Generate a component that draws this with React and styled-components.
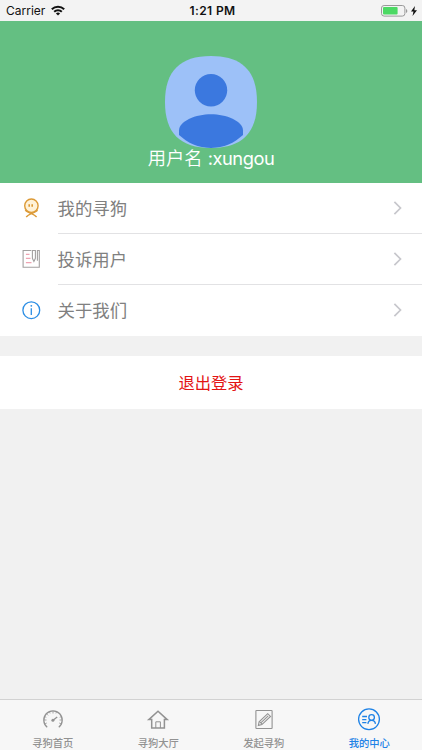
import React from 'react';
import styled, { createGlobalStyle } from 'styled-components';

const GlobalStyle = createGlobalStyle`
  * {
    box-sizing: border-box;
  }

  body {
    margin: 0;
    font-family: Inter, 'Noto Sans CJK SC', sans-serif;
    background: #f1f1f1;
  }
`;

const Screen = styled.div`
  display: flex;
  flex-direction: column;
  height: 100vh;
  overflow: hidden;
`;

const StatusBar = styled.div`
  display: grid;
  grid-template-columns: 1fr auto 1fr;
  align-items: center;
  height: 21px;
  padding: 0 5px 0 6px;
  background: #f3f3f3;
  color: #111;
  font-size: 12px;
`;

const StatusGroup = styled.div`
  display: flex;
  align-items: center;
  justify-content: ${(props) => (props.$end ? 'flex-end' : 'flex-start')};
  gap: ${(props) => (props.$end ? '3px' : '6px')};
`;

const Time = styled.span`
  padding-left: 2px;
  font-size: 12px;
  font-weight: 600;
  letter-spacing: 0.4px;
`;

const Profile = styled.div`
  display: flex;
  flex-direction: column;
  align-items: center;
  height: 162px;
  padding-top: 35px;
  background: #64bf82;
`;

const UserName = styled.div`
  margin-top: -1px;
  color: #fff;
  font-size: 18.3px;
  font-weight: 350;
  line-height: 22px;
  white-space: pre;
`;

const Latin = styled.span`
  font-weight: 400;
  letter-spacing: -0.45px;
`;

const Menu = styled.div`
  height: 153px;
  background: #fff;
`;

const MenuRow = styled.div`
  display: flex;
  align-items: center;
  height: 51px;
  padding-left: 21px;
`;

const MenuBody = styled.div`
  display: flex;
  flex: 1;
  align-items: center;
  justify-content: space-between;
  height: 51px;
  margin-left: 15.5px;
  padding-right: 19px;
  border-bottom: 1px solid ${(props) => (props.$last ? 'transparent' : '#e2e2e4')};
  color: #808080;
  font-size: 17.4px;
  font-weight: 400;
`;

const MenuLabel = styled.span`
  padding-bottom: 2px;
`;

const Logout = styled.div`
  display: flex;
  align-items: center;
  justify-content: center;
  height: 53px;
  margin-top: 20px;
  padding-bottom: 2px;
  background: #fff;
  color: #e31414;
  font-size: 16.3px;
`;

const TabBar = styled.div`
  display: grid;
  grid-template-columns: repeat(4, 1fr);
  height: 51px;
  margin-top: auto;
  border-top: 1px solid #d2d2d2;
  background: #f7f7f7;
`;

const Tab = styled.div`
  display: flex;
  flex-direction: column;
  align-items: center;
  padding-top: 7px;
  color: ${(props) => (props.$active ? '#1e82e6' : '#929292')};
  font-size: 10.3px;
  font-weight: 500;
  line-height: 14px;

  svg {
    margin-bottom: 5px;
  }
`;

const WifiIcon = () => (
  <svg width="14" height="11" viewBox="0 0 14 11" fill="none" stroke="#111" strokeWidth="2">
    <path d="M0.8 4.2a9 9 0 0 1 12.4 0" />
    <path d="M3.2 6.7a5.4 5.4 0 0 1 7.6 0" />
    <path d="M7 10.6L4.9 8.5a3 3 0 0 1 4.2 0z" fill="#111" stroke="none" />
  </svg>
);

const BatteryIcon = () => (
  <svg width="27" height="12" viewBox="0 0 27 12">
    <rect x="0.5" y="0.5" width="23.4" height="10.6" rx="2.6" fill="none" stroke="#999" />
    <rect x="2" y="2" width="14.6" height="7.6" rx="1" fill="#4cd964" />
    <path d="M25 4v4c1.8-.8 1.8-3.2 0-4z" fill="#999" />
  </svg>
);

const BoltIcon = () => (
  <svg width="6" height="10" viewBox="0 0 7 10" preserveAspectRatio="none">
    <path d="M4.6 0L0 5.6h2.9L1.8 10 7 4.2H3.9z" fill="#111" />
  </svg>
);

const Avatar = () => (
  <svg width="92" height="92" viewBox="0 0 92 92">
    <defs>
      <clipPath id="avatar">
        <path d="M46 0C77 0 92 15 92 46S77 92 46 92 0 77 0 46 15 0 46 0z" />
      </clipPath>
    </defs>
    <g clipPath="url(#avatar)">
      <rect width="92" height="92" fill="#9dc1f8" />
      <circle cx="46" cy="34.3" r="16.2" fill="#3b78df" />
      <path d="M14 74.5C14 65 31 58.3 46 58.3S78 65 78 74.5V79C69 87 59 92 46 92S23 87 14 79z" fill="#3b78df" />
    </g>
  </svg>
);

const FaceIcon = () => (
  <svg width="21" height="21" viewBox="0 0 21 21" fill="none" stroke="#dc9a36" strokeWidth="1.4">
    <path d="M4.2 12.2c1.5 1.6 4.2 2.4 6.4 3.5 2 .9 3.6 1.8 5 3.3M16.6 12.2c-1.5 1.6-4.2 2.4-6.4 3.5-2 .9-3.6 1.8-5 3.3" />
    <circle cx="10.4" cy="7.7" r="6.7" fill="#fff2d8" />
    <path d="M8.2 6.3v2.4M11.2 6.3v2.4" strokeWidth="1.6" />
  </svg>
);

const ReportIcon = () => (
  <svg width="21" height="21" viewBox="0 0 21 21" fill="none" stroke="#a3a0a0" strokeWidth="1.1">
    <path d="M10.3 1.5H2.1v16.7h16.2V1.5h-1.9v10.2" />
    <path d="M11.4 1.5h3v7.8l-1.5 3.1-1.5-3.1z" />
    <path d="M4.9 5.4h3.6M4.9 9.4h4.6M4.9 13.7h5.6" stroke="#efa3b2" strokeWidth="1.3" />
  </svg>
);

const InfoIcon = () => (
  <svg width="21" height="21" viewBox="0 0 21 21" fill="none" stroke="#2c8ee4" strokeWidth="1.3">
    <circle cx="10.3" cy="10.2" r="8.4" />
    <path d="M10.3 8.3v6.8" />
    <circle cx="10.3" cy="5.8" r="0.9" fill="#2c8ee4" stroke="none" />
  </svg>
);

const ChevronIcon = () => (
  <svg width="10" height="14" viewBox="0 0 10 14" fill="none" stroke="#c7c7cc" strokeWidth="1.7">
    <path d="M1.4 0.9L7.5 7l-6.1 6.1" />
  </svg>
);

const GaugeIcon = () => (
  <svg width="24" height="24" viewBox="0 0 24 24" fill="none" stroke="#929292" strokeWidth="1.3">
    <path d="M6.2 20.2A9.2 9.2 0 1 1 17.8 20.2" />
    <path d="M12 4v2.5M3 13h2.5M18.5 13H21M5.5 6.8l1.6 1.6M8.4 4.6l.7 1.8M15.6 4.6l-.7 1.8M3.6 9.6l1.7.7M20.4 9.6l-1.7.7M4 16.8l1.8-.8M20 16.8l-1.8-.8" strokeWidth="0.8" />
    <path d="M12 13.2l4.2-3.3" />
    <circle cx="11.9" cy="13.3" r="1.5" fill="#929292" stroke="none" />
  </svg>
);

const HomeIcon = () => (
  <svg width="24" height="24" viewBox="0 0 24 24" fill="none" stroke="#929292" strokeWidth="1.5">
    <path d="M2.8 12.6L12 4.3l9.2 8.3h-2.8V21H5.7v-8.4z" />
    <path d="M9.8 21v-6.2h4.6V21" strokeWidth="1" />
  </svg>
);

const EditIcon = () => (
  <svg width="24" height="24" viewBox="0 0 24 24" fill="none" stroke="#929292" strokeWidth="1.1">
    <rect x="3.9" y="3.5" width="16.2" height="18" rx="0.6" />
    <path d="M6.4 18.4l.7-3.5 8.6-8.2 2.8 2.7-8.6 8.2zM8 15.2l2.1 2M9.1 15.6l7.1-6.8" />
  </svg>
);

const ProfileIcon = () => (
  <svg width="24" height="24" viewBox="0 0 24 24" fill="none" stroke="#1e82e6" strokeWidth="1.3">
    <circle cx="12" cy="12.3" r="10.4" />
    <path d="M5.2 9.5h4.8M5.2 12.6h4.2M5.2 15.7h4.2" />
    <circle cx="14.6" cy="10.5" r="2.8" />
    <path d="M10.9 16.9c.1-2.4 1.5-3.6 3.7-3.6s3.6 1.2 3.8 3.6" />
  </svg>
);

const menu = [
  { label: '我的寻狗', Icon: FaceIcon },
  { label: '投诉用户', Icon: ReportIcon },
  { label: '关于我们', Icon: InfoIcon },
];

const tabs = [
  { label: '寻狗首页', Icon: GaugeIcon },
  { label: '寻狗大厅', Icon: HomeIcon },
  { label: '发起寻狗', Icon: EditIcon },
  { label: '我的中心', Icon: ProfileIcon, active: true },
];

const App = () => (
  <Screen>
    <GlobalStyle />
    <StatusBar>
      <StatusGroup>
        <span>Carrier</span>
        <WifiIcon />
      </StatusGroup>
      <Time>1:21 PM</Time>
      <StatusGroup $end>
        <BatteryIcon />
        <BoltIcon />
      </StatusGroup>
    </StatusBar>
    <Profile>
      <Avatar />
      <UserName>
        用户名 <Latin>:xungou</Latin>
      </UserName>
    </Profile>
    <Menu>
      {menu.map(({ label, Icon }, index) => (
        <MenuRow key={label}>
          <Icon />
          <MenuBody $last={index === menu.length - 1}>
            <MenuLabel>{label}</MenuLabel>
            <ChevronIcon />
          </MenuBody>
        </MenuRow>
      ))}
    </Menu>
    <Logout>退出登录</Logout>
    <TabBar>
      {tabs.map(({ label, Icon, active }) => (
        <Tab key={label} $active={active}>
          <Icon />
          <span>{label}</span>
        </Tab>
      ))}
    </TabBar>
  </Screen>
);

export default App;
